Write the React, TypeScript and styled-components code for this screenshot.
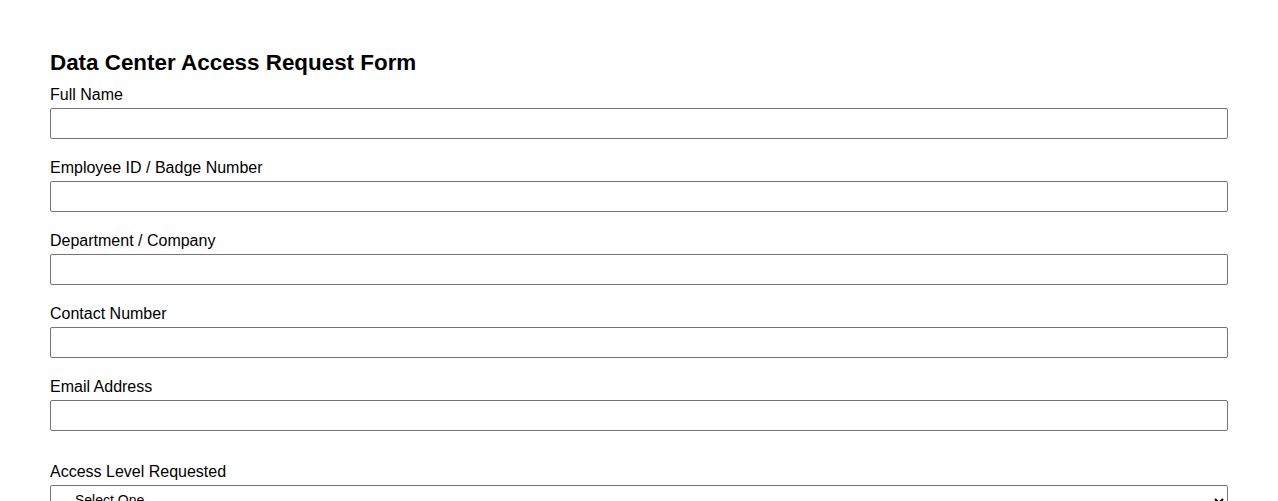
import React from "react";
import styled, { createGlobalStyle } from "styled-components";

const Global = createGlobalStyle`
  html, body { margin: 0; padding: 0; background: #fff; }
  body { font-family: "Liberation Sans", Arial, sans-serif; color: #000; }
`;

const Page = styled.div`
  padding: 50px 50px 0;
`;

const Title = styled.h2`
  margin: 0 0 11px;
  font-size: 22.4px;
  line-height: 25px;
  font-weight: bold;
`;

const Field = styled.div<{ $extra?: number }>`
  padding-top: ${(p) => p.$extra ?? 0}px;
  margin-bottom: 20px;
`;

const Label = styled.label`
  display: block;
  font-size: 16px;
  line-height: 18px;
  margin-bottom: 4px;
`;

const Input = styled.input`
  display: block;
  box-sizing: border-box;
  width: 100%;
  height: 31px;
  padding: 6px;
  margin: 0;
  border: 1px solid #767676;
  border-radius: 2px;
  font-family: "Liberation Sans", Arial, sans-serif;
  font-size: 16px;
  background: #fff;
`;

const Select = styled.select`
  display: block;
  box-sizing: border-box;
  width: 100%;
  height: 32px;
  padding: 5px 2px 7px 20px;
  margin: 0;
  border: 1px solid #767676;
  border-radius: 2px;
  font-family: "Liberation Sans", Arial, sans-serif;
  font-size: 14px;
  background: #fff;
  color: #000;
`;

const fields = [
  "Full Name",
  "Employee ID / Badge Number",
  "Department / Company",
  "Contact Number",
  "Email Address",
];

export default function App() {
  return (
    <>
      <Global />
      <Page>
        <Title>Data Center Access Request Form</Title>
        {fields.map((f) => (
          <Field key={f}>
            <Label>{f}</Label>
            <Input type="text" />
          </Field>
        ))}
        <Field $extra={12}>
          <Label>Access Level Requested</Label>
          <Select defaultValue="">
            <option value="">Select One</option>
            <option value="general">General</option>
            <option value="restricted">Restricted</option>
          </Select>
        </Field>
      </Page>
    </>
  );
}
